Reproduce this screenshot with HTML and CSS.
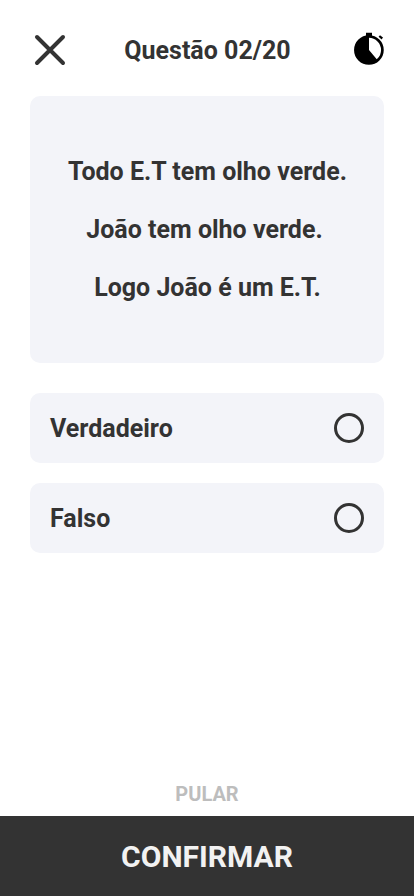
FILE: index.html
```html
<!DOCTYPE html>
<html lang="pt-BR">
<head>
<meta charset="utf-8">
<meta name="viewport" content="width=device-width, initial-scale=1">
<title>Questão</title>
<link rel="stylesheet" href="styles.css">
</head>
<body>
<header class="header">
  <button class="icon-button" aria-label="Fechar"><svg width="40" height="40" viewBox="0 0 40 40"><path d="M7 7l26 26M33 7l-26 26" fill="none" stroke="#333" stroke-width="4" stroke-linecap="round"/></svg></button>
  <h1 class="title">Questão 02/20</h1>
  <svg class="timer" width="32" height="36" viewBox="0 0 32 36"><circle cx="15.9" cy="19" r="13.5" fill="#fff" stroke="#000" stroke-width="2.7"/><path d="M16 19V5a14 14 0 1 0 9 24.7z"/><path d="M13 1.8h6v4h-6zM25.6 5.8l1.4-1.6 3 2.4-1.4 1.8z"/></svg>
</header>
<main class="content">
  <section class="question">
    <p>Todo E.T tem olho verde.</p>
    <p class="second">João tem olho verde.</p>
    <p>Logo João é um E.T.</p>
  </section>
  <div class="options">
    <label class="option"><span>Verdadeiro</span><input class="radio" type="radio" name="answer"></label>
    <label class="option"><span>Falso</span><input class="radio" type="radio" name="answer"></label>
  </div>
</main>
<button class="skip">PULAR</button>
<button class="confirm">CONFIRMAR</button>
</body>
</html>
```
FILE: styles.css
```css
* { box-sizing: border-box; }
body {
  margin: 0;
  height: 896px;
  display: flex;
  flex-direction: column;
  background: #fff;
  color: #333;
  font-family: Roboto, sans-serif;
  font-weight: 700;
}
button { border: 0; padding: 0; background: none; font: inherit; }
.header { height: 96px; padding: 30px 29px 24px 30px; display: grid; grid-template-columns: 40px 1fr 41px; }
.icon-button { width: 40px; height: 40px; }
.icon-button svg { display: block; }
.title { margin: 0; padding-left: 1px; text-align: center; font-size: 25px; line-height: 42px; }
.timer { justify-self: end; margin-top: 1px; }
.content { flex: 1; padding: 0 30px; }
.question {
  height: 267px;
  border-radius: 10px;
  background: #f3f4f9;
  display: flex;
  flex-direction: column;
  justify-content: center;
  gap: 29px;
  padding: 0 0 1px 1px;
  text-align: center;
  font-size: 25px;
  line-height: 29px;
}
.question p { margin: 0; }
.second { padding-right: 6px; }
.options { display: grid; gap: 20px; margin-top: 30px; }
.option {
  height: 70px;
  border-radius: 10px;
  padding: 0 20px;
  background: #f3f4f9;
  display: flex;
  align-items: center;
  justify-content: space-between;
  font-size: 25px;
}
.radio { appearance: none; width: 30px; height: 30px; margin: 0; border: 3px solid #333; border-radius: 50%; }
.skip { height: 44px; color: #bdbdbd; font-size: 20px; line-height: 44px; }
.confirm { height: 80px; background: #333; color: #f2f2f2; font-size: 30px; line-height: 79px; padding-top: 1px; }
```
